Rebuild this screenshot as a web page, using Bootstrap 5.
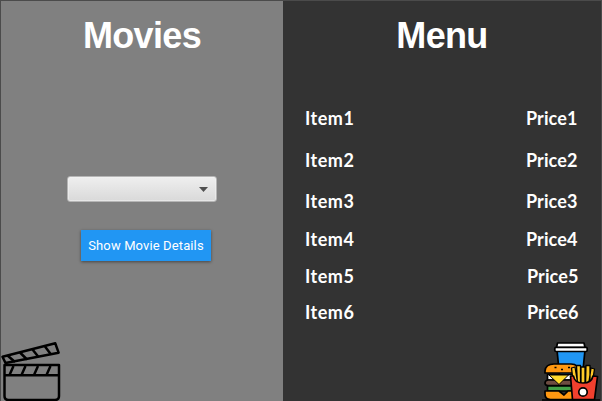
<!DOCTYPE html>
<html lang="en">
<head>
<meta charset="utf-8">
<title>Movies</title>
<link href="https://cdn.jsdelivr.net/npm/bootstrap@5.3.0/dist/css/bootstrap.min.css" rel="stylesheet">
<style>
body{width:602px;height:401px;background:#333}
.window{width:602px;height:401px;border:1px solid #4b4b4b;border-bottom:0}
.movies{width:282px;background:#808080}
.menu{background:#333}
.heading{font:bold 36px/42px "Liberation Sans",sans-serif;letter-spacing:-.65px;margin-top:14px;color:#fff}
.picker{width:150px;height:26px;margin-top:119px;border:1px solid #b5b5b5;border-radius:3px;background:linear-gradient(#efefef,#d9d9d9);box-shadow:inset 0 0 0 1px #f4f4f480;padding-right:8px}
.details{width:130px;height:31px;margin-top:28px;margin-left:8px;border:0;border-radius:0;background:#2196f3;color:#fff;font:13px/31px Roboto,sans-serif;letter-spacing:.12px;box-shadow:0 1px 3px #0007;white-space:nowrap}
.prices{margin-top:48px;padding:0 22px;font:bold 18px/26px Lato,"Liberation Sans",sans-serif;color:#fff}
.prices li{height:42px}
.prices li:nth-child(2){height:41px}
.prices li:nth-child(3){height:38px}
.prices li:nth-child(4){height:37px}
.prices li:nth-child(5){height:36px}
.prices li:nth-child(6){height:26px}
.prices .item{letter-spacing:.5px}
.prices .price{width:53px;letter-spacing:.1px}
.prices .nudge{padding-left:1px}
</style>
<script src="https://cdn.jsdelivr.net/npm/bootstrap@5.3.0/dist/js/bootstrap.bundle.min.js"></script>
</head>
<body class="m-0 overflow-hidden">
<main class="window d-flex overflow-hidden">
<section class="movies d-flex flex-column align-items-center flex-shrink-0">
<h1 class="heading mb-0">Movies</h1>
<div class="picker d-flex align-items-center justify-content-end" role="combobox" aria-label="Movie">
<svg width="9" height="5" viewBox="0 0 9 5"><path d="M0 0H9L4.5 5Z" fill="#505050"/></svg>
</div>
<button class="btn details p-0" type="button">Show Movie Details</button>
<svg class="mt-auto align-self-start" width="69" height="66" viewBox="1 0 69 66" fill="none" stroke="#000" stroke-width="2.5" stroke-linejoin="round">
<path d="M4.5 30H59V61Q59 65 55 65H8.5Q4.5 65 4.5 61ZM4.5 40.3H59"/>
<path d="M2.5 21.8 55.3 8.3 58.6 17.7 5.5 28Z"/>
<path d="M7.5 20.5 15 27M20 17.5 27 24.5M32.5 14.5 38.5 22M45 11.5 51 19.5"/>
<path d="M13.5 31 9.5 40M25.5 31 21.5 40M38 31 34 40M50.5 31 46.5 40"/>
</svg>
</section>
<section class="menu d-flex flex-column flex-grow-1">
<h1 class="heading mb-0 text-center">Menu</h1>
<ul class="prices list-unstyled mb-0">
<li class="d-flex justify-content-between"><span class="item">Item1</span><span class="price">Price1</span></li>
<li class="d-flex justify-content-between"><span class="item">Item2</span><span class="price">Price2</span></li>
<li class="d-flex justify-content-between"><span class="item">Item3</span><span class="price">Price3</span></li>
<li class="d-flex justify-content-between"><span class="item">Item4</span><span class="price">Price4</span></li>
<li class="d-flex justify-content-between"><span class="item">Item5</span><span class="price nudge">Price5</span></li>
<li class="d-flex justify-content-between"><span class="item">Item6</span><span class="price nudge">Price6</span></li>
</ul>
<svg class="mt-auto align-self-end flex-shrink-0" width="66" height="66" viewBox="0 0 66 66" stroke="#000" stroke-width="1.7" stroke-linejoin="round">
<path d="M22 15H50L47 45H25Z" fill="#2196f3"/>
<path d="M22.5 8H49L50 12.5H21.5Z" fill="#fff"/>
<rect x="19.8" y="12.3" width="32.4" height="4.2" rx="1.3" fill="#fff"/>
<path d="M10 38V36Q10.500 29 19 29H36Q44 29 44 38Z" fill="#ff9811"/>
<path d="M19.500 32.500h2M26 34.500h2M33 32.500h2" stroke-width="1.400"/>
<path d="M12.500 39.500H38V45H12.500Z" fill="#fff"/>
<path d="M13 45H38V50.500H13Q10 50.500 10 48T13 45Z" fill="#6d4c41"/>
<path d="M14 40H33.500L24 49.500Z" fill="#ffda2d" stroke-width="1"/>
<path d="M12.500 51H38V56H12.500Z" fill="#43a047"/>
<path d="M10 56H24L29 60 33 56H39V64.500H15.500Q10 64.500 10 59Z" fill="#ff9811"/>
<path d="M36.500 33 40 32 43 50H38.500ZM41.500 30.500H45.500V50H42.500ZM46 32H50V50H46ZM51 30.500H55V50H50.500ZM56 33 59.500 34 57 50H53.500Z" fill="#ffc928" stroke-width="1.300"/>
<path d="M35.500 41 38.500 41Q39.500 48 48 48T58 41L62.500 41.500 59.500 64.500H37.500Z" fill="#f1402e"/>
<circle cx="48" cy="57" r="4.200" fill="#fff"/>
<path d="M7 65H65"/>
</svg>
</section>
</main>
</body>
</html>
